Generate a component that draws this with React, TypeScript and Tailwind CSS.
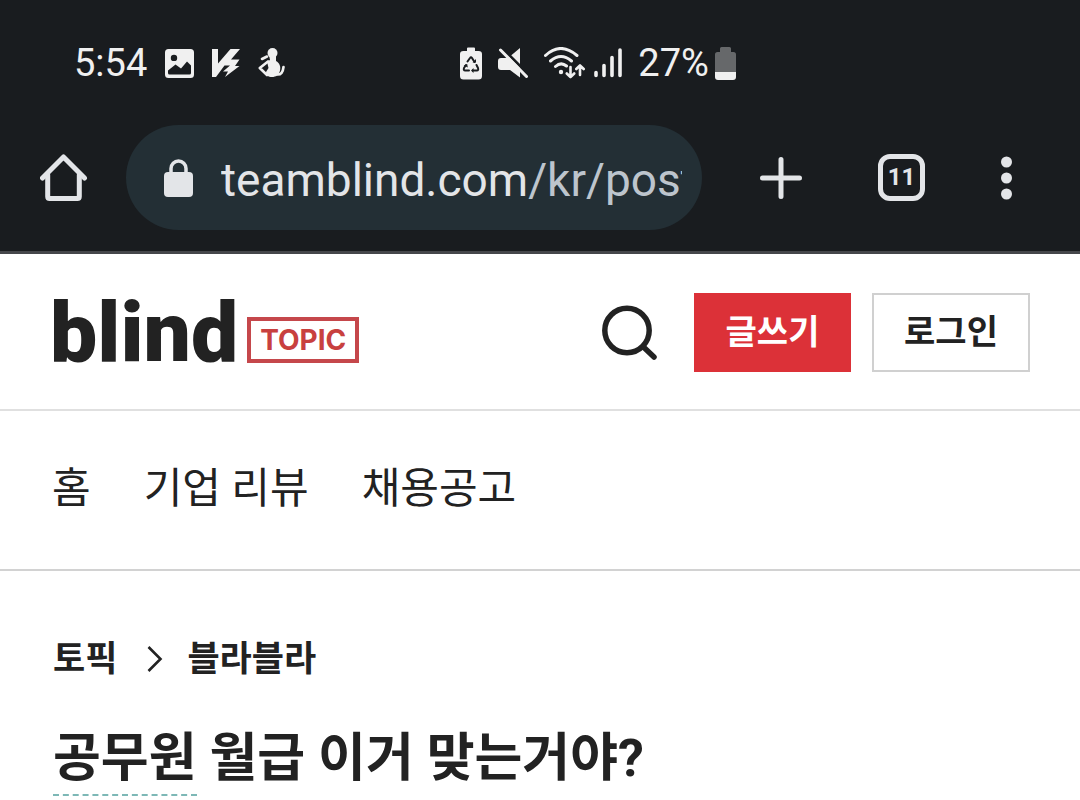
const navItems = ["홈", "기업 리뷰", "채용공고"]

function ImageIcon() {
  return (
    <svg width="29" height="29" viewBox="0 0 29 29" fill="currentColor" aria-hidden="true">
      <path
        fillRule="evenodd"
        d="M3.5 0h22A3.5 3.5 0 0 1 29 3.500v22a3.500 3.500 0 0 1-3.500 3.500h-22A3.500 3.500 0 0 1 0 25.500v-22A3.500 3.500 0 0 1 3.500 0zM9 5.700a3.200 3.200 0 1 0 0 6.400 3.200 3.200 0 0 0 0-6.400zM3 21.500V24q0 1.500 1.500 1.500h20q1.500 0 1.500-1.500v-7.500L22 12.500l-6 7-5.500-4z"
      />
    </svg>
  )
}

function VaccineIcon() {
  return (
    <svg width="28" height="28" viewBox="0 0 28 28" fill="currentColor" aria-hidden="true">
      <path d="M0 0h6v14.500L18.500 0H28l-9 10.500h8.500L23 17h4.500L13 28l3-5.500h-5l7-6h-5.500L4 28H0z" />
    </svg>
  )
}

function FigureIcon() {
  return (
    <svg width="27" height="30" viewBox="0 0 27 30" fill="none" stroke="currentColor" strokeLinecap="round" strokeLinejoin="round" aria-hidden="true">
      <circle cx="14.500" cy="5" r="5" fill="currentColor" stroke="none" />
      <path
        d="M11 7h7v6c3.500 2 5 5.500 4 9.500-1 4.500-4 6.500-8 6.500-4 0-6-2-6-5l2.500-4-1.500-6.500 3-1.500z"
        fill="currentColor"
        stroke="none"
      />
      <path d="M10 13.500 1.800 20 9 27M9 8.500 4 11M19 26.500c4 .5 6-2.500 6.500-7.500" strokeWidth="2.600" />
    </svg>
  )
}

function RecycleBatteryIcon() {
  return (
    <svg width="22" height="33" viewBox="0 0 22 33" aria-hidden="true">
      <path d="M7 1.500Q7 .5 8 .5h6q1 0 1 1V4h3.500Q22 4 22 7v22q0 3.500-3.500 3.500h-15Q0 32.500 0 29V7q0-3 3.500-3H7z" fill="currentColor" />
      <g fill="none" stroke="#191c1f" strokeWidth="2" strokeLinecap="round" strokeLinejoin="round">
        <path d="M7.500 14.500 10 11q1-1.500 2 0l2.500 4" />
        <path d="M16.500 18l1.500 3q.8 2.500-1.200 2.500h-3.800" />
        <path d="M9 23.500H5.200q-2 0-1.200-2.500l2-3" />
      </g>
      <path d="M12.500 15.500h3.500v-3.500zM13.500 21v5l-2.500-2.500zM3.700 18.500l3.500-1.500.6 3.500z" fill="#191c1f" />
    </svg>
  )
}

function MuteIcon() {
  return (
    <svg width="30" height="30" viewBox="0 0 30 30" aria-hidden="true">
      <path d="M22 0v29.500L12 22H3q-3 0-3-3v-6q0-3 3-3h7z" fill="currentColor" />
      <path d="M4.500.5 31 27" stroke="#191c1f" strokeWidth="3" />
      <path d="M2.500 2 28.500 28.500" stroke="currentColor" strokeWidth="3" strokeLinecap="round" />
    </svg>
  )
}

function WifiIcon() {
  return (
    <svg width="42" height="32" viewBox="0 0 42 32" fill="none" stroke="currentColor" strokeWidth="3" strokeLinecap="round" strokeLinejoin="round" aria-hidden="true">
      <path d="M1.500 8.500Q16.500-5.500 33 8.500M6.500 14Q17 5 27.500 14M11.500 19.500Q17 14.500 22.500 19" />
      <circle cx="17" cy="25" r="2.200" fill="currentColor" stroke="none" />
      <path d="M26.500 20v10M22.800 26.500l3.700 3.700 3.700-3.700M36 28V18.500M32.300 22l3.700-3.700 3.700 3.700" strokeWidth="2.600" />
    </svg>
  )
}

function SignalIcon() {
  return (
    <svg width="28" height="30" viewBox="0 0 28 30" fill="none" stroke="currentColor" strokeWidth="3.600" strokeLinecap="round" aria-hidden="true">
      <path d="M2 24.500v3M10 17.500v10M18 9.500v18M26 2v25.500" />
    </svg>
  )
}

function BatteryIcon() {
  return (
    <svg width="21" height="33" viewBox="0 0 21 33" aria-hidden="true">
      <path d="M5 1.500Q5 0 6.500 0h8Q16 0 16 1.500V5h2.500Q21 5 21 7.500V26H0V7.500Q0 5 2.500 5H5z" fill="#66686a" />
      <path d="M0 25h21V30q0 3-3 3H3q-3 0-3-3z" fill="currentColor" />
    </svg>
  )
}

function StatusBar() {
  return (
    <div className="flex items-center pt-[39px] pb-[38px] pl-[74px] text-[38px] leading-12 text-[#f0f0f0]">
      <div className="flex items-center gap-[18px]">
        <span>5:54</span>
        <ImageIcon />
        <VaccineIcon />
        <FigureIcon />
      </div>
      <div className="ml-[175px] flex items-center gap-4">
        <RecycleBatteryIcon />
        <MuteIcon />
        <div className="flex items-center gap-2">
          <WifiIcon />
          <SignalIcon />
        </div>
        <div className="flex items-center gap-[6px]">
          <span>27%</span>
          <BatteryIcon />
        </div>
      </div>
    </div>
  )
}

function BrowserToolbar() {
  return (
    <div className="flex items-center pb-[21px] pl-10 pr-[68px] text-[#e3e5e8]">
      <button type="button" aria-label="Home" className="shrink-0">
        <svg width="48" height="48" viewBox="0 0 48 48" fill="none" stroke="currentColor" strokeWidth="5" strokeLinecap="round" strokeLinejoin="round">
          <path d="M2.500 24 23.500 3 44.500 24" />
          <path d="M7.700 21v21.500q0 2 2 2h27.600q2 0 2-2V21" />
        </svg>
      </button>

      {/* Address bar */}
      <div className="ml-[38px] flex h-[105px] min-w-0 flex-1 items-center rounded-full bg-[#232f35] pl-[38px] pr-5">
        <svg width="29" height="38" viewBox="0 0 29 38" className="mr-7 shrink-0" aria-hidden="true">
          <path d="M7 15V9.500a7.500 7.500 0 0 1 15 0V15" fill="none" stroke="currentColor" strokeWidth="3.500" />
          <rect x="0" y="13" width="29" height="25" rx="4" fill="currentColor" />
        </svg>
        <div className="min-w-0 flex-1 overflow-hidden pt-1 whitespace-nowrap text-[46px] leading-14">
          teamblind.com<span className="text-[#bdc5cd]">/kr/post</span>
        </div>
      </div>

      <div className="ml-[58px] flex shrink-0 items-center gap-[76px]">
        <button type="button" aria-label="New tab">
          <svg width="42" height="42" viewBox="0 0 42 42" stroke="currentColor" strokeWidth="5" strokeLinecap="round">
            <path d="M21 2.500v37M2.500 21h37" />
          </svg>
        </button>
        <button
          type="button"
          aria-label="Tabs"
          className="flex size-[47px] items-center justify-center rounded-xl border-5 border-current pb-px text-2xl font-bold"
        >
          11
        </button>
        <button type="button" aria-label="Menu">
          <svg width="11" height="44" viewBox="0 0 11 44" fill="currentColor">
            <circle cx="5.500" cy="6" r="5.500" />
            <circle cx="5.500" cy="22" r="5.500" />
            <circle cx="5.500" cy="38" r="5.500" />
          </svg>
        </button>
      </div>
    </div>
  )
}

function SiteHeader() {
  return (
    <div className="flex items-center justify-between border-b-2 border-[#e0e0e0] pt-[39px] pb-[37px] pl-[50px] pr-[50px]">
      <a href="/kr" className="flex items-end gap-[9px]">
        <span className="text-[84px] leading-[79px] font-black">blind</span>
        <span className="mb-[9px] border-4 border-[#c5474b] px-[9px] font-['Inter'] text-[28px] leading-[38px] font-bold text-[#c8403f]">
          TOPIC
        </span>
      </a>
      <div className="flex items-center">
        <button type="button" aria-label="검색">
          <svg width="56" height="56" viewBox="0 0 56 56" fill="none" stroke="currentColor" strokeWidth="5.500" strokeLinecap="round">
            <circle cx="25" cy="25.500" r="22.200" />
            <path d="M42 42.500 52 52" />
          </svg>
        </button>
        <button type="button" className="ml-9 h-[79px] w-[157px] bg-[#dc3138] pb-px text-[34px] font-bold text-white">
          글쓰기
        </button>
        <button type="button" className="ml-[21px] h-[79px] w-[158px] border-2 border-[#d0d0d0] pb-px text-[34px] font-bold">
          로그인
        </button>
      </div>
    </div>
  )
}

export default function App() {
  return (
    <div className="min-h-screen bg-white font-['Roboto','Noto_Sans_CJK_KR',sans-serif] text-[#222222]">
      <div className="border-b-3 border-[#45474b] bg-[#191c1f]">
        <StatusBar />
        <BrowserToolbar />
      </div>

      <header>
        <SiteHeader />
        <nav className="flex gap-[53px] border-b-2 border-[#d2d2d2] px-[52px] pt-[50px] pb-[52px] text-[42px] leading-14">
          {navItems.map((item) => (
            <a key={item} href="#">
              {item}
            </a>
          ))}
        </nav>
      </header>

      <main className="px-[53px] pt-[65px]">
        {/* Breadcrumb */}
        <div className="flex items-center text-[35px] leading-12 font-bold">
          <a href="#">토픽</a>
          <svg width="16" height="28" viewBox="0 0 16 28" className="mr-6 ml-[30px]" fill="none" stroke="currentColor" strokeWidth="2.600" aria-hidden="true">
            <path d="M1.500 1 13.500 13 1.500 25" />
          </svg>
          <a href="#">블라블라</a>
        </div>

        <h1 className="mt-[37px] text-[52px] leading-[76px] font-bold">
          <a href="#" className="inline-block h-[75px] border-b-2 border-dashed border-[#7db8b6]">
            공무원
          </a>{" "}
          월급 이거 맞는거야?
        </h1>
      </main>
    </div>
  )
}
